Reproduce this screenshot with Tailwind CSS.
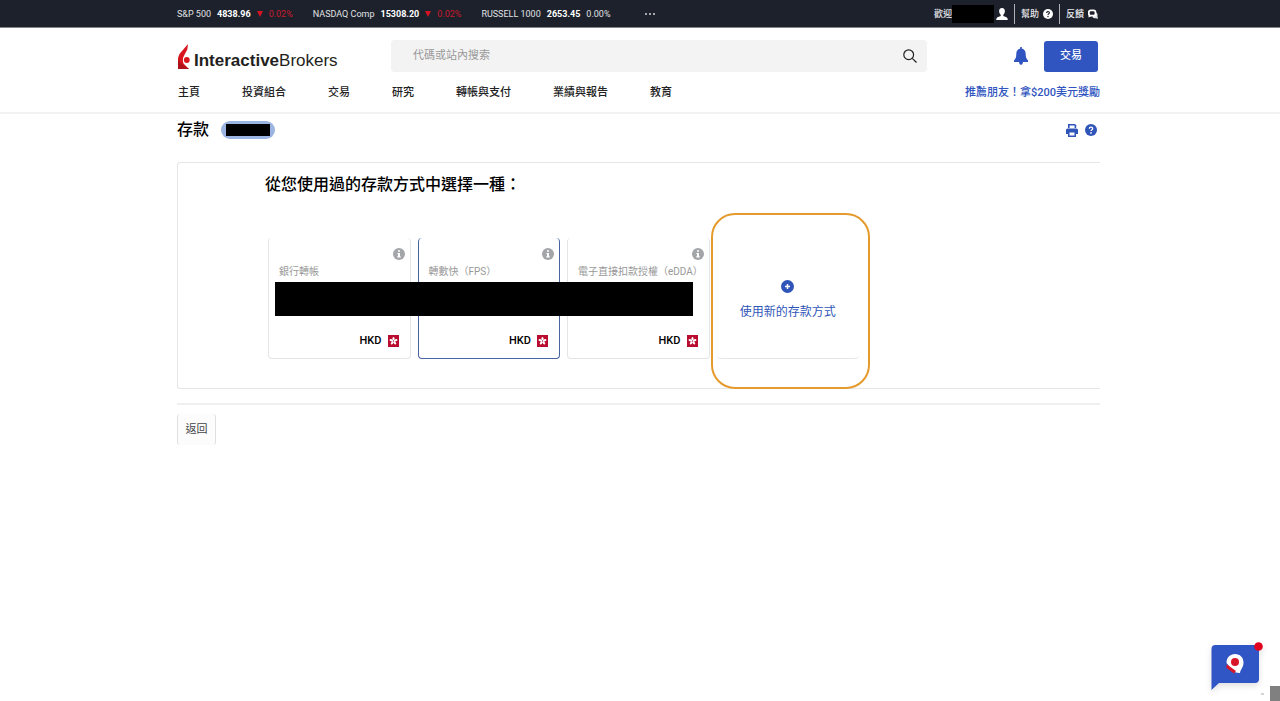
<!DOCTYPE html>
<html lang="zh-Hant">
<head>
<meta charset="utf-8">
<meta name="viewport" content="width=device-width, initial-scale=1">
<title>存款</title>
<script src="https://cdn.jsdelivr.net/npm/@tailwindcss/browser@4"></script>
</head>
<body class="min-h-screen bg-white font-['Roboto','Noto_Sans_CJK_TC',sans-serif] text-[11px] leading-4 text-[#222]">
<svg class="hidden" aria-hidden="true">
  <symbol id="info" viewBox="0 0 12 12"><circle cx="6" cy="6" r="6" fill="#a3a5a9"/><path d="M5 2.3h2v1.5H5zM4.4 4.9H7v3.4h.7v1.1H4.3V8.300H5V6h-.6z" fill="#fff"/></symbol>
  <symbol id="help" viewBox="0 0 12 12"><circle cx="6" cy="6" r="6" fill="currentColor"/><path d="M4.300 4.700C4.300 2.600 7.700 2.600 7.700 4.600 7.700 5.800 6 5.700 6 7.100" fill="none" stroke="var(--mark)" stroke-width="1.300"/><circle cx="6" cy="8.900" r=".85" fill="var(--mark)"/></symbol>
  <symbol id="hk" viewBox="0 0 11 12"><path d="M0 0h11v12H0z" fill="#ba0c2f"/><g fill="#fff"><ellipse cx="5.500" cy="3.800" rx="1.100" ry="1.900"/><ellipse cx="5.500" cy="3.800" rx="1.100" ry="1.900" transform="rotate(72 5.500 6)"/><ellipse cx="5.500" cy="3.800" rx="1.100" ry="1.900" transform="rotate(144 5.500 6)"/><ellipse cx="5.500" cy="3.800" rx="1.100" ry="1.900" transform="rotate(216 5.500 6)"/><ellipse cx="5.500" cy="3.800" rx="1.100" ry="1.900" transform="rotate(288 5.500 6)"/></g><circle cx="5.500" cy="6" r=".6" fill="#ba0c2f"/></symbol>
</svg>

<div class="h-7 border-b border-[#85878d] bg-[#1d212c] pr-[3px] text-[9px] text-white">
  <div class="mx-auto flex h-full max-w-[923px] items-center justify-between">
    <div class="flex items-center gap-5">
      <div class="flex items-center gap-1.5"><span class="text-[#e0e1e4]">S&amp;P 500</span><b>4838.96</b><svg class="h-1.5 w-1.5" viewBox="0 0 6 6"><path d="M0 0h6L3 6z" fill="#d81222"/></svg><span class="text-[#c81a2b]">0.02%</span></div>
      <div class="flex items-center gap-1.5"><span class="text-[#e0e1e4]">NASDAQ Comp</span><b>15308.20</b><svg class="h-1.5 w-1.5" viewBox="0 0 6 6"><path d="M0 0h6L3 6z" fill="#d81222"/></svg><span class="text-[#c81a2b]">0.02%</span></div>
      <div class="flex items-center gap-1.5"><span class="text-[#e0e1e4]">RUSSELL 1000</span><b>2653.45</b><span class="text-[#e0e1e4]">0.00%</span></div>
      <button class="ml-3.5" aria-label="更多"><svg class="h-3 w-3" viewBox="0 0 12 12" fill="#d5d6d9"><circle cx="2" cy="6" r="1"/><circle cx="6" cy="6" r="1"/><circle cx="10" cy="6" r="1"/></svg></button>
    </div>
    <div class="flex items-center font-medium text-[#e6e6e9]">
      <a href="#" class="flex items-center"><span>歡迎</span><span class="h-[18px] w-[42px] bg-black"></span><svg class="ml-0.5 h-3 w-3" viewBox="0 0 12 12" fill="#fff"><path d="M6 0C8 0 9 1.400 8.900 3.300 8.800 5 7.900 6.300 7.300 6.800V8L10.500 9.200Q11.700 9.800 11.800 12H.2Q.3 9.800 1.500 9.200L4.700 8V6.800C4.100 6.300 3.200 5 3.100 3.300 3 1.400 4 0 6 0z"/></svg></a>
      <a href="#" class="ml-1.5 flex h-5 items-center gap-1 border-l border-[#b0b1b5] pl-1.5 [--mark:#1d212c]"><span>幫助</span><svg class="h-2.5 w-2.5 text-white"><use href="#help"/></svg></a>
      <a href="#" class="ml-1.5 flex h-5 items-center gap-1 border-l border-[#b0b1b5] pl-1.5 pr-0.5"><span>反饋</span><svg class="h-2.5 w-2.5" viewBox="0 0 10 10"><path d="M8.600 3.800Q10 5 9.500 7.500L10 9.800 7.800 9.200Q5.500 9.500 4.300 7.900z" fill="#e6e6e9"/><rect x=".8" y="1.300" width="6.700" height="5.400" rx="2" fill="#1d212c" stroke="#fff" stroke-width="1.800"/><path d="M1 5.500.3 8.500 3.600 7z" fill="#fff"/></svg></a>
    </div>
  </div>
</div>

<header class="border-b-2 border-[#f3f3f4] pr-[3px]">
  <div class="mx-auto max-w-[923px]">
    <div class="flex items-center pt-3">
      <a href="#" class="flex w-[214px] items-end pt-0.5 text-[#231f20]" aria-label="InteractiveBrokers">
        <svg class="mr-1 h-[27px] w-[13px] shrink-0" viewBox="0 0 13 27"><path d="M11 0 10.300 5.500Q8 9.500 6 14Q5.500 17 6.500 19.500L12 25H1V14Q1.500 10 5 7z" fill="#d8161f"/><path d="M1 16 6 21 12 25H1z" fill="#b0121b"/><circle cx="9.800" cy="16" r="2.900" fill="#d8161f"/></svg><span class="font-['Liberation_Sans',sans-serif] text-[17px] leading-5"><span class="font-bold">Interactive</span>Brokers</span>
      </a>
      <form class="flex h-8 w-[536px] items-center rounded bg-[#f3f3f3] pr-2.5">
        <input type="text" aria-label="搜索" placeholder="代碼或站內搜索" class="min-w-0 flex-1 bg-transparent pl-[22px] text-[11px] placeholder:text-[#999] outline-none">
        <button type="button" aria-label="搜索"><svg class="h-3.5 w-3.5" viewBox="0 0 14 14" fill="none" stroke="#222" stroke-width="1.200"><circle cx="5.700" cy="5.700" r="4.900"/><path d="m9.300 9.300 4.200 4.200"/></svg></button>
      </form>
      <div class="ml-auto flex items-center gap-4 pr-0.5">
        <button aria-label="通知"><svg class="h-[18px] w-3.5" viewBox="0 0 14 18" fill="#3055c0"><path d="M6.200 0h1.600v1.500C10.500 2 11.700 4.200 11.700 7c0 3.500.8 5 2.300 6.400V15H0v-1.600C1.500 12 2.300 10.500 2.300 7c0-2.800 1.200-5 3.900-5.500zM5 15h4Q8.800 17.900 7 18 5.200 17.900 5 15z"/></svg></button>
        <button class="h-[31px] w-[54px] rounded-[3px] bg-[#3055c0] font-medium text-white">交易</button>
      </div>
    </div>
    <div class="flex items-center justify-between pt-[13px] pb-[11px] font-medium">
      <nav class="flex gap-[42px] pl-px">
        <a href="#">主頁</a><a href="#">投資組合</a><a href="#">交易</a><a href="#">研究</a><a href="#">轉帳與支付</a><a href="#">業績與報告</a><a href="#">教育</a>
      </nav>
      <a href="#" class="text-[#3055c0]">推薦朋友！拿$200美元獎勵</a>
    </div>
  </div>
</header>

<main class="pr-[3px]">
  <div class="mx-auto max-w-[923px]">
    <div class="flex items-center justify-between pt-1">
      <div class="flex items-center gap-3">
        <h1 class="text-[16px] leading-6 font-medium text-black">存款</h1>
        <span class="flex h-[18px] w-[54px] items-center justify-center rounded-full bg-[#9bb4e2]"><span class="h-3 w-11 bg-black"></span></span>
      </div>
      <div class="flex items-center gap-[7px] pr-[3px] text-[#3055b8] [--mark:#fff]">
        <button aria-label="列印"><svg class="h-[13px] w-3" viewBox="0 0 12 13"><path d="M2 0h7l1.200 1.200V4H2z" fill="currentColor"/><path d="M3.600 1.500h5V4h-5z" fill="#fff"/><path d="M1.500 4.500h9Q12 4.500 12 6v4h-2v3H2v-3H0V6Q0 4.500 1.500 4.500z" fill="currentColor"/><path d="M3.500 8.500h5v3h-5z" fill="#fff"/></svg></button>
        <button aria-label="說明"><svg class="h-3 w-3"><use href="#help"/></svg></button>
      </div>
    </div>

    <section class="mt-5 rounded-l-[3px] border border-r-0 border-[#e6e6e8] pt-2.5 pb-[29px] pl-[87px]">
      <h2 class="text-[16px] leading-6 font-medium text-black">從您使用過的存款方式中選擇一種：</h2>
      <div class="relative mt-[41px] ml-[3px] grid max-w-[591px] grid-cols-4 gap-[7px]">
        <button class="flex h-[121px] flex-col rounded-[4px] border border-t-0 border-[#e4e5e8] pt-2.5 pr-[11px] pb-[9px] pl-2.5 text-left">
          <svg class="-mr-1.5 h-3 w-3 self-end"><use href="#info"/></svg>
          <span class="mt-1 text-[10px] whitespace-nowrap text-[#999]">銀行轉帳</span>
          <span class="mt-auto flex items-center gap-1.5 self-end font-medium text-black">HKD<svg class="h-3 w-[11px]"><use href="#hk"/></svg></span>
        </button>
        <button class="flex h-[121px] flex-col rounded-[4px] border border-t-0 border-[#4863a0] pt-2.5 pr-[11px] pb-[9px] pl-2.5 text-left">
          <svg class="-mr-1.5 h-3 w-3 self-end"><use href="#info"/></svg>
          <span class="mt-1 text-[10px] whitespace-nowrap text-[#999]">轉數快（FPS）</span>
          <span class="mt-auto flex items-center gap-1.5 self-end font-medium text-black">HKD<svg class="h-3 w-[11px]"><use href="#hk"/></svg></span>
        </button>
        <button class="flex h-[121px] flex-col rounded-[4px] border border-t-0 border-[#e4e5e8] pt-2.5 pr-[11px] pb-[9px] pl-2.5 text-left">
          <svg class="-mr-1.5 h-3 w-3 self-end"><use href="#info"/></svg>
          <span class="mt-1 text-[10px] whitespace-nowrap text-[#999]">電子直接扣款授權（eDDA）</span>
          <span class="mt-auto flex items-center gap-1.5 self-end font-medium text-black">HKD<svg class="h-3 w-[11px]"><use href="#hk"/></svg></span>
        </button>
        <button class="relative flex h-[121px] flex-col items-center justify-center gap-[11px] rounded-[4px] border-b border-[#e4e5e8] pt-1 text-[12px] text-[#3055b8]">
          <svg class="h-[13px] w-[13px]" viewBox="0 0 13 13"><circle cx="6.500" cy="6.500" r="6.500" fill="#3055b8"/><path d="M6.500 4v5M4 6.500h5" stroke="#fff" stroke-width="1.500"/></svg>
          <span>使用新的存款方式</span>
          <span class="absolute -top-[25px] -right-[11px] -bottom-[31px] -left-[6px] rounded-[24px] border-2 border-[#e59a2c]"></span>
        </button>
        <span class="absolute top-11 left-[7px] h-[34px] w-[418px] bg-black"></span>
      </div>
    </section>

    <div class="mt-3.5 border-t-2 border-[#efeff0] pt-[9px]">
      <button class="h-[31px] w-[39px] rounded-[3px] border-x border-[#dfe0e2] bg-[#fcfcfc] text-[#444]">返回</button>
    </div>
  </div>
</main>

<button aria-label="聊天" class="fixed right-4 bottom-[7px] h-[52px] w-[56px]">
  <svg class="h-full w-full overflow-visible drop-shadow-md" viewBox="0 0 56 52"><path d="M3.500 48V7Q3.500 3 7.500 3H47Q51 3 51 7v30q0 4-4 4H11z" fill="#3055c5"/><circle cx="50.500" cy="4.500" r="4.300" fill="#e2001f"/><path d="M18.500 21C18.500 15.500 22 12 27 12s8.500 3.500 8.500 8.500c0 5-3 6.500-3.500 10.500-4 0-6-1-8.500-4z" fill="#fff"/><circle cx="27" cy="20" r="4" fill="#d8162a"/><path d="m19 22.500 9 6.500-2 2.500-8-6z" fill="#d8162a"/></svg>
</button>
<div class="fixed right-0 bottom-0 flex items-end gap-1"><svg class="mb-1 h-1.5 w-1.5" viewBox="0 0 6 6"><path d="M1 3h3" stroke="#aaa"/></svg><span class="h-[15px] w-2.5 bg-[#808080]"></span></div>
</body>
</html>
